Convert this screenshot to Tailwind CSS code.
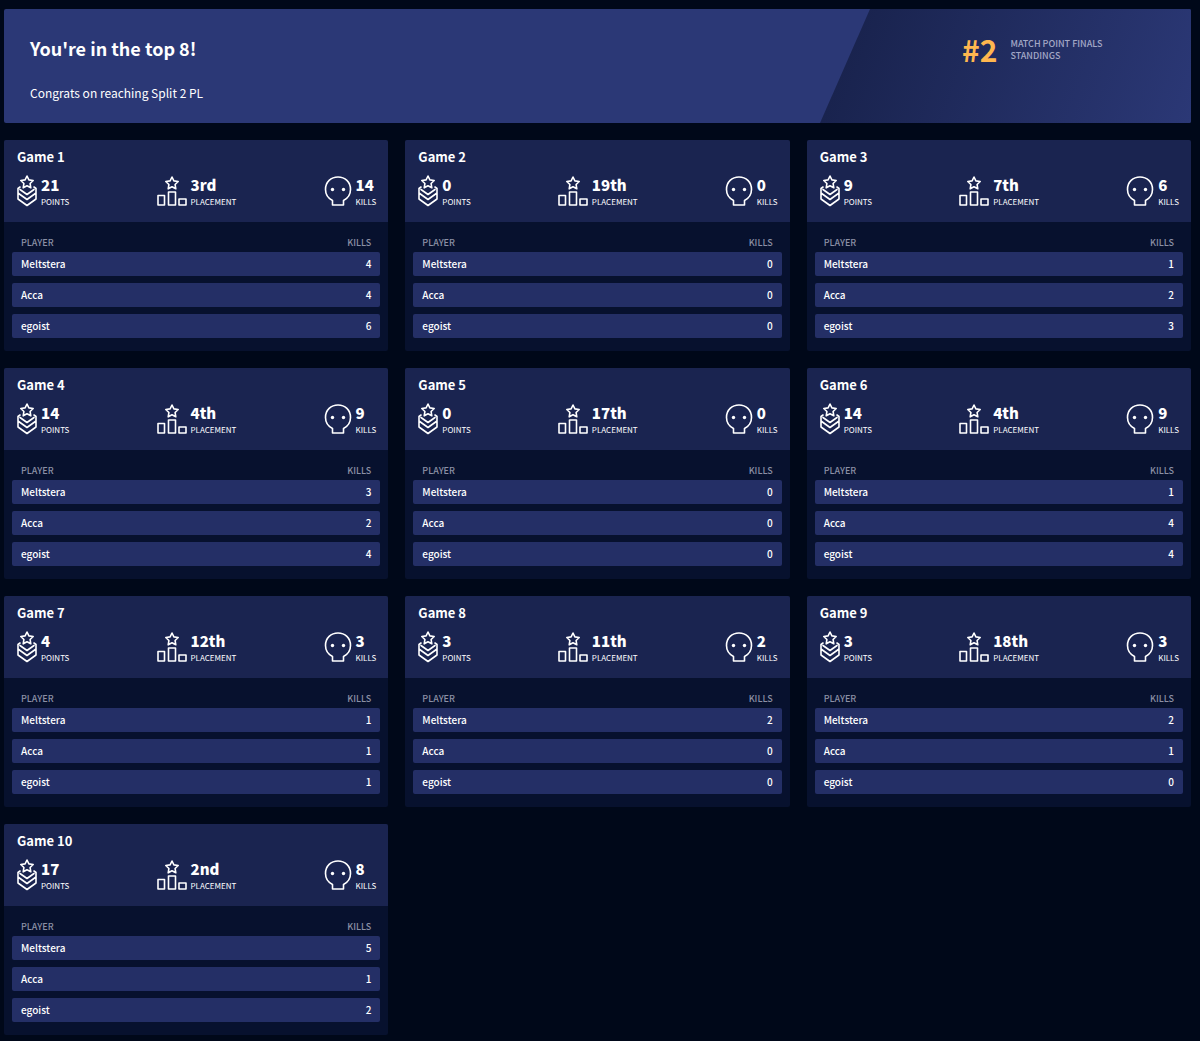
<!DOCTYPE html>
<html lang="en">
<head>
    <meta charset="UTF-8">
    <meta name="viewport" content="width=device-width, initial-scale=1.0">
    <title>Split 2 PL | Match Point Finals</title>
    <script src="https://cdn.jsdelivr.net/npm/@tailwindcss/browser@4"></script>
</head>
<body class="bg-[#000819] text-white font-['Noto_Sans_CJK_JP','Noto_Sans',sans-serif]">
    <main class="pt-[9px] pb-1 pl-1 pr-[9px]">
        <!-- Banner -->
        <section class="flex justify-between bg-[#2b3876] rounded-xs overflow-hidden mb-[17px]">
            <div class="pl-[26px] pt-[27px] pb-[18px]">
                <h1 class="text-lg leading-6 font-bold mb-[21px]">You're in the top 8!</h1>
                <p class="text-xs leading-6">Congrats on reaching Split 2 PL</p>
            </div>
            <div class="w-[371px] flex items-start gap-[13px] pl-[142px] pt-[22px] bg-linear-[110deg,#19234e_10%,#2b3876] [clip-path:polygon(50px_0,100%_0,100%_100%,0_100%)]">
                <span class="text-3xl leading-9 font-bold text-[#ffb74f]">#2</span>
                <p class="pt-[7px] text-[9px] leading-3 font-medium text-[#a3a8c6]">MATCH POINT FINALS<br>STANDINGS</p>
            </div>
        </section>

        <!-- Games -->
        <section id="games" class="grid grid-cols-3 gap-[17px]"></section>
    </main>

    <script>
        const games = [
            { points: 21, place: '3rd', kills: [4, 4, 6] },
            { points: 0, place: '19th', kills: [0, 0, 0] },
            { points: 9, place: '7th', kills: [1, 2, 3] },
            { points: 14, place: '4th', kills: [3, 2, 4] },
            { points: 0, place: '17th', kills: [0, 0, 0] },
            { points: 14, place: '4th', kills: [1, 4, 4] },
            { points: 4, place: '12th', kills: [1, 1, 1] },
            { points: 3, place: '11th', kills: [2, 0, 0] },
            { points: 3, place: '18th', kills: [2, 1, 0] },
            { points: 17, place: '2nd', kills: [5, 1, 2] }
        ];
        const players = ['Meltstera', 'Acca', 'egoist'];

        const pointsIcon = `
            <svg class="w-5 h-8" viewBox="0 0 20 32" fill="none" stroke="currentColor" stroke-width="1.6" stroke-linejoin="round" stroke-linecap="round">
                <path d="M10 1l1.900 3.900 4.300.6-3.100 3 .7 4.300L10 10.800l-3.800 2 .7-4.300-3.100-3 4.300-.6z"/>
                <path d="M3 12L1 13.500v10.500l9 6.500 9-6.500V13.500L17 12M3 14.500l7 5 7-5M1 18l9 6.500 9-6.500"/>
            </svg>`;
        const placementIcon = `
            <svg class="w-[30px] h-8" viewBox="0 0 30 32" fill="none" stroke="currentColor" stroke-width="1.6" stroke-linejoin="round">
                <path d="M15 2l1.900 3.900 4.300.6-3.100 3 .7 4.300-3.800-2-3.800 2 .7-4.300-3.100-3 4.300-.6z"/>
                <path d="M1 20.500h6.500v9.500H1zM11.500 17h7v13h-7zM22 24h7v6h-7z"/>
            </svg>`;
        const killsIcon = `
            <svg class="w-7 h-8" viewBox="0 0 28 32" fill="none" stroke="currentColor" stroke-width="1.6" stroke-linejoin="round">
                <path d="M8.500 30v-4.500C4.200 23.300 1.500 19.500 1.500 14.500 1.500 7 7 2 14 2s12.500 5 12.500 12.500c0 5-2.700 8.800-7 11V30z"/>
                <circle cx="8.500" cy="14.500" r="1.700" fill="currentColor" stroke="none"/>
                <circle cx="19.500" cy="14.500" r="1.700" fill="currentColor" stroke="none"/>
            </svg>`;

        function stat(icon, value, label) {
            return `
                <div class="flex gap-1">
                    ${icon}
                    <div>
                        <div class="text-[15px] leading-[19px] font-black">${value}</div>
                        <div class="text-[8px] leading-4">${label}</div>
                    </div>
                </div>`;
        }

        const grid = document.getElementById('games');
        games.forEach((game, i) => {
            const total = game.kills.reduce((a, b) => a + b, 0);
            const rows = players.map((name, p) => `
                <tr class="flex justify-between bg-[#242f66] rounded-xs px-[9px] pb-px text-[10px] leading-[23px] font-medium">
                    <td>${name}</td>
                    <td>${game.kills[p]}</td>
                </tr>`).join('');

            const card = document.createElement('article');
            card.className = 'bg-[#07112e] rounded-xs overflow-hidden';
            card.innerHTML = `
                <header class="bg-[#1a2450] pl-[13px] pr-3 pt-[7px] pb-3">
                    <h2 class="text-[13px] leading-5 font-bold mb-2">Game ${i + 1}</h2>
                    <div class="flex justify-between">
                        ${stat(pointsIcon, game.points, 'POINTS')}
                        ${stat(placementIcon, game.place, 'PLACEMENT')}
                        ${stat(killsIcon, total, 'KILLS')}
                    </div>
                </header>
                <table class="block px-2 pt-3 pb-[13px]">
                    <thead class="block">
                        <tr class="flex justify-between px-[9px] text-[9px] leading-[18px] text-[#8b90a5]">
                            <th class="font-medium">PLAYER</th>
                            <th class="font-medium">KILLS</th>
                        </tr>
                    </thead>
                    <tbody class="flex flex-col gap-[7px]">${rows}</tbody>
                </table>`;
            grid.appendChild(card);
        });
    </script>
</body>
</html>
